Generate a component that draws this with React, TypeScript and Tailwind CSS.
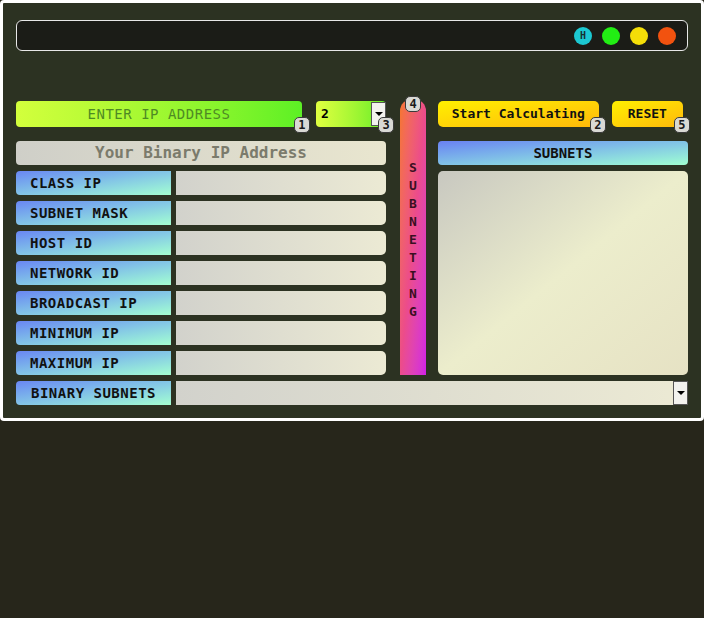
import React from "react";

const rows = [
  "CLASS IP",
  "SUBNET MASK",
  "HOST ID",
  "NETWORK ID",
  "BROADCAST IP",
  "MINIMUM IP",
  "MAXIMUM IP",
];

const mono = { fontFamily: '"DejaVu Sans Mono", "Liberation Mono", monospace' };

function Badge({ n, className }: { n: string; className: string }) {
  return (
    <div
      className={
        "absolute flex h-[16px] w-[16px] items-center justify-center rounded-[5px] border border-[#3a3a3a] bg-[#d9d9d4] text-[12px] font-bold leading-none text-[#1a1a1a] " +
        className
      }
    >
      {n}
    </div>
  );
}

function Arrow() {
  return (
    <div className="flex h-full w-[15px] items-center justify-center border border-[#555] bg-[#f2f2ee]">
      <div className="h-0 w-0 border-x-[4px] border-t-[4px] border-x-transparent border-t-black"></div>
    </div>
  );
}

export default function App() {
  return (
    <div className="min-h-[618px] w-[704px] bg-[#27261b]" style={mono}>
      <div className="flex flex-col rounded-[4px] border-[3px] border-white bg-[#2c3222] px-[13px] pb-[13px] pt-[17px]">
        {/* top bar */}
        <div className="flex h-[31px] items-center justify-end gap-[10px] rounded-[6px] border border-[#e8e8e8] bg-[#1b1c17] pr-[11px]">
          <div className="flex h-[18px] w-[18px] items-center justify-center rounded-full bg-[#1cc8d2] text-[10px] font-bold text-[#17302f]">
            H
          </div>
          <div className="h-[18px] w-[18px] rounded-full bg-[#22ee14]"></div>
          <div className="h-[18px] w-[18px] rounded-full bg-[#f4de08]"></div>
          <div className="h-[18px] w-[18px] rounded-full bg-[#f2520f]"></div>
        </div>

        <div className="mt-[50px] flex">
          {/* left column */}
          <div className="flex w-[370px] flex-col">
            <div className="flex h-[26px] gap-[14px]">
              <div className="relative flex w-[286px] items-center justify-center rounded-[4px] bg-gradient-to-r from-[#d3ff3c] to-[#5cf025] text-[14px] font-medium tracking-[0.5px] text-[#4f8a24]">
                ENTER IP ADDRESS
                <Badge n="1" className="-bottom-[6px] -right-[8px]" />
              </div>
              <div className="relative flex w-[70px] items-center justify-between rounded-[4px] bg-gradient-to-r from-[#e0ff40] to-[#60ee28] pl-[5px] text-[13px] font-bold text-black">
                2
                <div className="h-[24px]">
                  <Arrow />
                </div>
                <Badge n="3" className="-bottom-[6px] -right-[8px]" />
              </div>
            </div>
            <div className="mt-[14px] flex h-[24px] items-center justify-center rounded-[4px] bg-gradient-to-r from-[#cfcfc8] to-[#e9e6cf] text-[16px] font-bold text-[#7b7b6c]">
              Your Binary IP Address
            </div>
            <div className="mt-[6px] flex flex-col gap-[6px]">
              {rows.map((r) => (
                <div key={r} className="flex h-[24px] gap-[5px]">
                  <div className="flex w-[155px] items-center rounded-l-[4px] bg-gradient-to-br from-[#6a86f2] to-[#a4ffd0] pl-[14px] text-[14px] font-bold tracking-[0.5px] text-[#111]">
                    {r}
                  </div>
                  <div className="flex-1 rounded-r-[5px] bg-gradient-to-r from-[#d2d2cc] to-[#ecead4]"></div>
                </div>
              ))}
            </div>
          </div>

          {/* vertical subneting bar */}
          <div className="relative ml-[14px] -mt-[2px] flex w-[26px] flex-col items-center justify-center rounded-t-[12px] bg-gradient-to-br from-[#f6762a] via-[#ec4c8a] to-[#d21ee6] pt-[6px] text-[13px] font-bold leading-[18px] text-[#3a0f22]">
            {"SUBNETING".split("").map((c, i) => (
              <div key={i}>{c}</div>
            ))}
            <Badge n="4" className="-top-[3px] left-[5px]" />
          </div>

          {/* right column */}
          <div className="ml-[12px] flex w-[252px] flex-col">
            <div className="flex h-[26px] gap-[13px]">
              <div className="relative flex w-[161px] items-center justify-center rounded-[5px] bg-gradient-to-br from-[#fff000] to-[#ffb80a] text-[13px] font-bold text-[#111]">
                Start Calculating
                <Badge n="2" className="-bottom-[6px] -right-[7px]" />
              </div>
              <div className="relative flex w-[71px] items-center justify-center rounded-[5px] bg-gradient-to-br from-[#fff000] to-[#ffb80a] text-[13px] font-bold text-[#111]">
                RESET
                <Badge n="5" className="-bottom-[6px] -right-[7px]" />
              </div>
            </div>
            <div className="mt-[14px] flex h-[24px] items-center justify-center rounded-[4px] bg-gradient-to-br from-[#6a80f2] to-[#a0ffd0] text-[14px] font-bold text-[#111]">
              SUBNETS
            </div>
            <div className="mt-[6px] flex-1 rounded-[5px] bg-gradient-to-br from-[#c8c8c0] via-[#ecedcc] to-[#e6e2c4]"></div>
          </div>
        </div>

        {/* binary subnets */}
        <div className="mt-[6px] flex h-[24px] gap-[5px]">
          <div className="flex w-[155px] items-center justify-center rounded-l-[4px] bg-gradient-to-br from-[#6a86f2] to-[#a4ffd0] text-[14px] font-bold tracking-[0.5px] text-[#111]">
            BINARY SUBNETS
          </div>
          <div className="flex flex-1 justify-end bg-gradient-to-r from-[#d2d2cc] to-[#ecead4]">
            <Arrow />
          </div>
        </div>
      </div>
    </div>
  );
}
